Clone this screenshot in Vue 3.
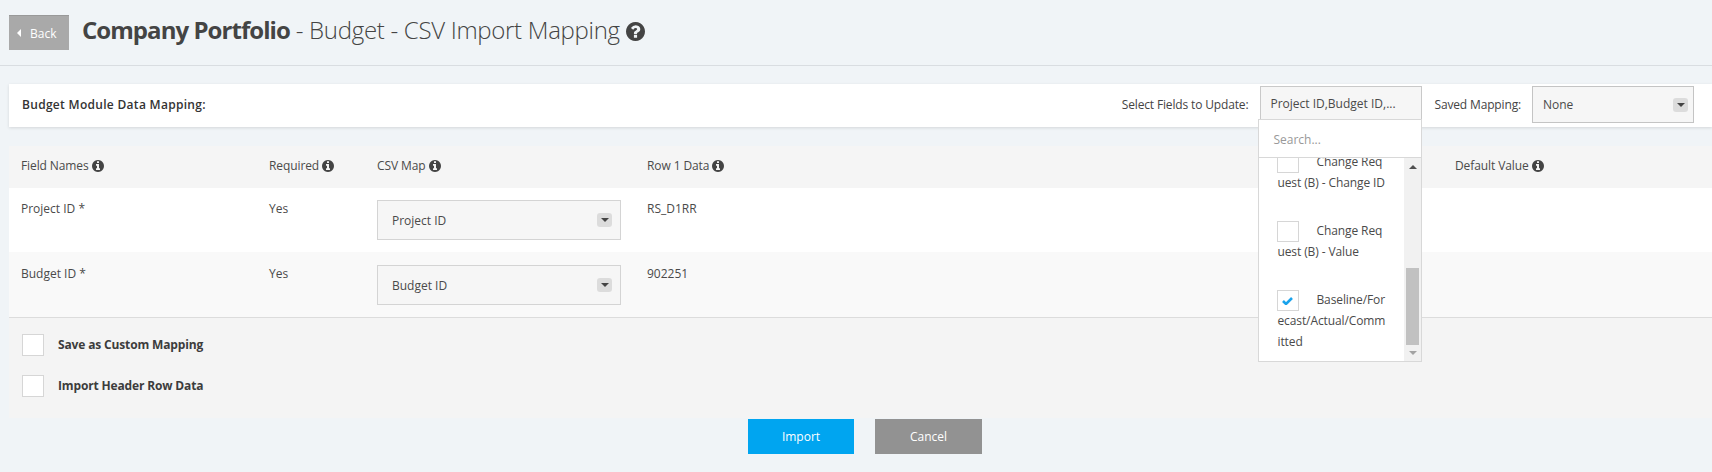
<script setup>
const infoPath = 'M1152 1376v-160q0-14-9-23t-23-9h-96v-512q0-14-9-23t-23-9h-320q-14 0-23 9t-9 23v160q0 14 9 23t23 9h96v320h-96q-14 0-23 9t-9 23v160q0 14 9 23t23 9h448q14 0 23-9t9-23zm-128-896v-160q0-14-9-23t-23-9h-192q-14 0-23 9t-9 23v160q0 14 9 23t23 9h192q14 0 23-9t9-23zm640 416q0 209-103 385.5t-279.5 279.5-385.5 103-385.5-103-279.5-279.5-103-385.5 103-385.5 279.5-279.5 385.5-103 385.5 103 279.5 279.5 103 385.5z'
const helpPath = 'M1024 1376v-192q0-14-9-23t-23-9h-192q-14 0-23 9t-9 23v192q0 14 9 23t23 9h192q14 0 23-9t9-23zm256-672q0-88-55.5-163t-138.5-116-170-41q-243 0-371 213-15 24 8 42l132 100q7 6 19 6 16 0 25-12 53-68 86-92 34-24 86-24 48 0 85.5 26t37.5 59q0 38-20 61t-68 45q-63 28-115.5 86.5t-52.5 125.5v36q0 14 9 23t23 9h192q14 0 23-9t9-23q0-19 21.5-49.5t54.5-49.5q32-18 49-28.5t46-35 44.5-48 28-60.5 12.5-81zm384 192q0 209-103 385.5t-279.5 279.5-385.5 103-385.5-103-279.5-279.5-103-385.5 103-385.5 279.5-279.5 385.5-103 385.5 103 279.5 279.5 103 385.5z'
const headers = ['Field Names', 'Required', 'CSV Map', 'Row 1 Data', 'Default Value']
const rows = [
  { name: 'Project ID *', req: 'Yes', map: 'Project ID', data: 'RS_D1RR' },
  { name: 'Budget ID *', req: 'Yes', map: 'Budget ID', data: '902251' },
]
const options = [
  { lines: ['Change Req', 'uest (B) - Change ID'], checked: false },
  { lines: ['Change Req', 'uest (B) - Value'], checked: false },
  { lines: ['Baseline/For', 'ecast/Actual/Comm', 'itted'], checked: true },
]
const extras = ['Save as Custom Mapping', 'Import Header Row Data']
</script>

<template>
  <div class="page">
    <header class="top">
      <button class="back"><span class="back-arrow"></span>Back</button>
      <h1 class="title">
        <strong>Company Portfolio</strong> - Budget - CSV Import Mapping
        <svg class="help" viewBox="128 128 1536 1536"><path :d="helpPath" /></svg>
      </h1>
    </header>

    <section class="bar">
      <span class="bar-title">Budget Module Data Mapping:</span>
      <span class="bar-label first">Select Fields to Update:</span>
      <div class="multi">
        <div class="multi-btn">Project ID,Budget ID,...</div>
        <div class="menu">
          <div class="search">Search...</div>
          <div class="list-wrap">
            <div class="list">
              <div v-for="o in options" :key="o.lines.join()" class="opt">
                <div v-for="(l, n) in o.lines" :key="n" class="opt-line">
                  <span v-if="n === 0" class="opt-box">
                    <svg v-if="o.checked" class="tick" viewBox="0 0 11 8"><path d="M1 4 4 7 10 1" /></svg>
                  </span>{{ l }}
                </div>
              </div>
            </div>
            <div class="track">
              <span class="arr up"></span>
              <span class="thumb"></span>
              <span class="arr down"></span>
            </div>
          </div>
        </div>
      </div>
      <span class="bar-label second">Saved Mapping:</span>
      <div class="select saved">
        <span>None</span>
        <span class="caret"></span>
      </div>
    </section>

    <section class="table">
      <div class="grid head">
        <div v-for="h in headers" :key="h" class="cell">
          {{ h }} <svg class="info" viewBox="128 128 1536 1536"><path :d="infoPath" /></svg>
        </div>
      </div>
      <div v-for="(r, i) in rows" :key="r.name" class="grid row" :class="{ alt: i === 1 }">
        <div class="cell">{{ r.name }}</div>
        <div class="cell">{{ r.req }}</div>
        <div class="cell"><div class="select map"><span>{{ r.map }}</span><span class="caret"></span></div></div>
        <div class="cell">{{ r.data }}</div>
        <div class="cell"></div>
      </div>
      <div class="extras">
        <label v-for="e in extras" :key="e" class="extra"><span class="box"></span>{{ e }}</label>
      </div>
    </section>

    <div class="actions">
      <button class="btn import">Import</button>
      <button class="btn cancel">Cancel</button>
    </div>
  </div>
</template>

<style>
html, body { margin: 0; background: #f0f4f7; }
</style>

<style scoped>
.page {
  height: 472px;
  overflow: hidden;
  background: #f0f4f7;
  font-family: "Open Sans", sans-serif;
  font-size: 12px;
  color: #4a4a4a;
}
.top {
  display: flex;
  align-items: flex-start;
  height: 65px;
  box-sizing: content-box;
  border-bottom: 1px solid #d9dde1;
  padding-left: 9px;
}
.back {
  width: 60px;
  height: 35px;
  margin-top: 15px;
  border: 0;
  border-top: 1px solid #999;
  padding: 0 0 0 8px;
  background: #a9a9a9;
  color: #fff;
  font: 12px "Open Sans", sans-serif;
  display: flex;
  align-items: center;
  justify-content: flex-start;
}
.back-arrow {
  width: 0;
  height: 0;
  margin-right: 9px;
  border-style: solid;
  border-width: 4px 4px 4px 0;
  border-color: transparent #fff transparent transparent;
}
.title {
  margin: 13px 0 0 13px;
  font-size: 24px;
  line-height: 33px;
  font-weight: 300;
  color: #444;
  white-space: nowrap;
  letter-spacing: -0.3px;
}
.title strong { font-weight: 700; letter-spacing: -0.95px; }
.help { width: 19px; height: 19px; fill: #444; vertical-align: -2px; }
.bar {
  display: flex;
  align-items: flex-start;
  height: 43px;
  margin: 18px 0 19px 9px;
  background: #fff;
  box-shadow: 0 1px 3px rgba(0, 0, 0, 0.12);
}
.bar-title {
  margin: 12px 0 0 13px;
  font-weight: 600;
  color: #333;
  letter-spacing: 0.3px;
}
.bar-label { margin-top: 12px; color: #444; letter-spacing: -0.15px; }
.first { margin-left: auto; }
.second { margin-left: 12px; }
.multi {
  position: relative;
  margin: 2px 0 0 12px;
  width: 162px;
}
.multi-btn {
  box-sizing: border-box;
  height: 33px;
  padding: 8px 9px 0;
  background: #f6f6f6;
  border: 1px solid #c9c9c9;
  border-bottom: 0;
  white-space: nowrap;
}
.menu {
  position: absolute;
  z-index: 5;
  top: 33px;
  left: -2px;
  width: 164px;
  box-sizing: border-box;
  height: 243px;
  background: #fff;
  border: 1px solid #d8d8d8;
  display: flex;
  flex-direction: column;
}
.search {
  flex: none;
  height: 38px;
  box-sizing: border-box;
  padding: 11px 14px 0;
  color: #999;
  border-bottom: 1px solid #d8d8d8;
}
.list-wrap { flex: 1; display: flex; overflow: hidden; min-height: 0; }
.list { flex: 1; padding: 0 0 0 18px; margin-top: -7px; min-width: 0; }
.opt { height: 69px; letter-spacing: -0.1px; }
.opt-line { line-height: 21px; white-space: nowrap; }
.opt-box {
  display: inline-block;
  position: relative;
  box-sizing: border-box;
  width: 22px;
  height: 21px;
  margin: -3px 17px -3px 0;
  border: 1px solid #d6d6d6;
  background: #fff;
  vertical-align: middle;
}
.tick {
  position: absolute;
  left: 4px;
  top: 6px;
  width: 11px;
  height: 8px;
  fill: none;
  stroke: #1aa3ec;
  stroke-width: 2.6;
}
.track {
  flex: none;
  width: 17px;
  background: #f1f1f1;
  position: relative;
}
.thumb {
  position: absolute;
  left: 2px;
  width: 13px;
  top: 110px;
  height: 77px;
  background: #c1c1c1;
}
.arr { position: absolute; left: 5px; width: 0; height: 0; border-style: solid; border-color: transparent; }
.up { top: 7px; border-width: 0 4px 4px; border-bottom-color: #505050; }
.down { top: 193px; border-width: 4px 4px 0; border-top-color: #a3a3a3; }
.select {
  box-sizing: border-box;
  display: flex;
  align-items: center;
  justify-content: space-between;
  background: #f6f6f6;
  border: 1px solid #c4c4c4;
}
.saved {
  width: 162px;
  height: 37px;
  margin: 2px 18px 0 11px;
  padding: 0 5px 0 10px;
}
.map {
  width: 244px;
  height: 40px;
  border-color: #d4d4d4;
  padding: 0 8px 0 14px;
}
.caret {
  width: 15px;
  height: 14px;
  border-radius: 3px;
  background: #dcdcdc;
  position: relative;
}
.caret::after {
  content: "";
  position: absolute;
  left: 3.5px;
  top: 5px;
  border-style: solid;
  border-width: 4px 4px 0;
  border-color: #444 transparent transparent;
}
.table { margin-left: 9px; }
.grid {
  display: grid;
  grid-template-columns: 248px 108px 270px 808px 1fr;
}
.cell { padding-left: 12px; }
.head {
  height: 42px;
  background: #f5f5f5;
  align-items: center;
  padding-bottom: 3px;
  box-sizing: border-box;
  letter-spacing: -0.1px;
}
.info { width: 12px; height: 12px; fill: #444; vertical-align: -2px; }
.row { height: 64px; background: #fff; padding-top: 12px; box-sizing: border-box; }
.row.alt { height: 65px; background: #f9f9f9; padding-top: 13px; }
.row .cell { line-height: 17px; }
.extras {
  box-sizing: border-box;
  height: 101px;
  background: #f4f4f4;
  border-top: 1px solid #dcdcdc;
  padding: 16px 0 0 13px;
  display: flex;
  flex-direction: column;
  gap: 19px;
}
.extra {
  display: flex;
  align-items: center;
  gap: 14px;
  font-weight: 700;
  color: #3c3c3c;
  letter-spacing: -0.15px;
  line-height: 20px;
}
.box {
  box-sizing: border-box;
  width: 22px;
  height: 22px;
  background: #fff;
  border: 1px solid #d6d6d6;
}
.actions {
  display: flex;
  justify-content: flex-start;
  gap: 21px;
  padding: 1px 0 0 748px;
}
.btn {
  width: 106px;
  height: 35px;
  border: 0;
  color: #fff;
  font: 12px "Open Sans", sans-serif;
}
.import { background: #00a5f0; }
.cancel { background: #929292; width: 107px; }
</style>
